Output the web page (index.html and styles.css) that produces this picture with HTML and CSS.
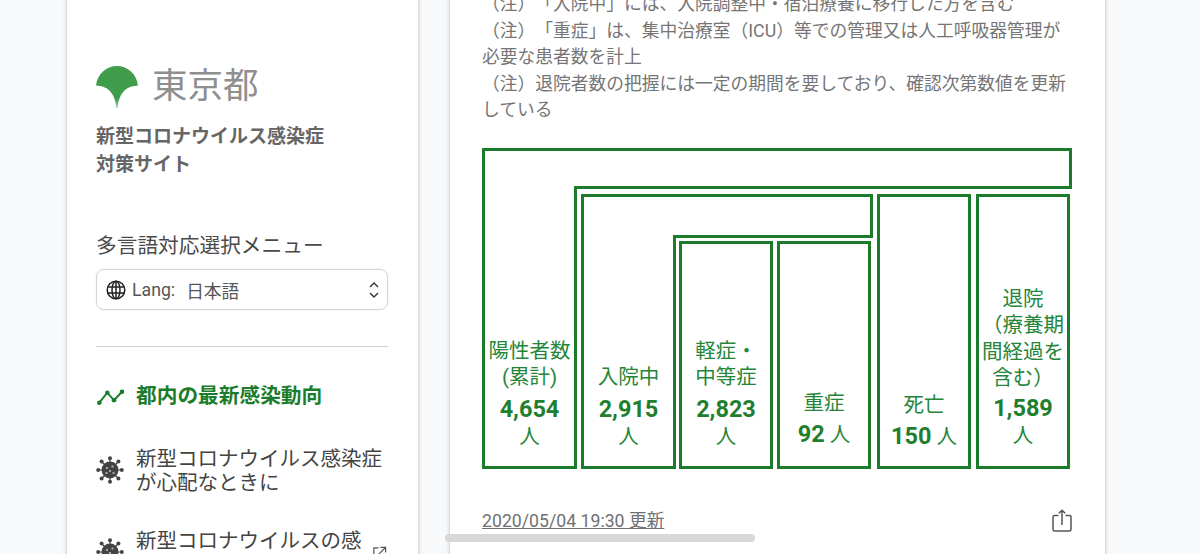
FILE: index.html
```html
<!DOCTYPE html>
<html lang="ja">
<head>
<meta charset="utf-8">
<title>都内の最新感染動向</title>
<link rel="stylesheet" href="styles.css">
</head>
<body>
<div class="page">
  <aside class="side">
    <div class="logo">
      <svg class="ginkgo" viewBox="0 0 42 42"><defs><linearGradient id="g" x1="0" y1="0" x2="0" y2="1"><stop offset="0.78" stop-color="#3f9d4c"/><stop offset="1" stop-color="#a5d4aa"/></linearGradient></defs><path fill="url(#g)" d="M0 19.500C1.500 8 10 0 21 0S40.500 8 42 19.500C32 20 23 25 21.700 42h-1.400C19 25 10 20 0 19.500Z"/></svg>
      <span class="logo-text">東京都</span>
    </div>
    <h1 class="site-title">新型コロナウイルス感染症<br>対策サイト</h1>
    <div class="lang-label">多言語対応選択メニュー</div>
    <div class="select">
      <svg class="globe" viewBox="0 0 20 20" fill="none" stroke="#222" stroke-width="1.5"><circle cx="10" cy="10" r="8.800"/><ellipse cx="10" cy="10" rx="4" ry="8.800"/><path d="M1.600 7h16.800M1.600 13h16.800M10 1v18"/></svg>
      <span class="lang-key">Lang:</span><span class="lang-val">日本語</span>
      <svg class="updown" viewBox="0 0 10 18" fill="none" stroke="#333" stroke-width="1.400"><path d="M1 6l4-4 4 4M1 12l4 4 4-4"/></svg>
    </div>
    <hr class="rule">
    <nav class="nav">
      <a class="nav-item active">
        <svg class="nav-icon trend" viewBox="0 0 28 20" fill="none" stroke="#1b7d2b" stroke-width="2"><path d="M3.300 15.700 11.300 5.700 18 13.300 26 4.700"/><circle cx="3.300" cy="15.700" r="2.300" fill="#1b7d2b" stroke="none"/><circle cx="11.300" cy="5.700" r="2.300" fill="#1b7d2b" stroke="none"/><circle cx="18" cy="13.300" r="2.300" fill="#1b7d2b" stroke="none"/><circle cx="26" cy="4.700" r="2.300" fill="#1b7d2b" stroke="none"/></svg>
        <span>都内の最新感染動向</span>
      </a>
      <a class="nav-item">
        <svg class="nav-icon virus" viewBox="0 0 28 28"><use href="#v"/><defs><g id="v"><circle cx="14" cy="14" r="8.500" fill="#444"/><g stroke="#444" stroke-width="1.200"><path d="M14 2v24M2 14h24M5.500 5.500l17 17M22.500 5.500l-17 17"/></g><g fill="#444"><circle cx="14" cy="2.200" r="2"/><circle cx="14" cy="25.800" r="2"/><circle cx="2.200" cy="14" r="2"/><circle cx="25.800" cy="14" r="2"/><circle cx="5.600" cy="5.600" r="2"/><circle cx="22.400" cy="5.600" r="2"/><circle cx="5.600" cy="22.400" r="2"/><circle cx="22.400" cy="22.400" r="2"/></g><g fill="#bbb"><circle cx="11" cy="12" r="1.100"/><circle cx="16.500" cy="10.500" r="1.100"/><circle cx="14" cy="15" r="1.100"/><circle cx="10.500" cy="17" r="1.100"/><circle cx="17.500" cy="17" r="1.100"/></g></g></defs></svg>
        <span>新型コロナウイルス感染症が心配なときに</span>
      </a>
      <a class="nav-item ext">
        <svg class="nav-icon virus" viewBox="0 0 28 28"><use href="#v"/></svg>
        <span>新型コロナウイルスの感染症</span>
        <svg class="ext-icon" viewBox="0 0 16 16" fill="none" stroke="#555" stroke-width="1.300"><path d="M7 2H2v12h12V9M9 1.500h5.500V7M14.500 1.500 7 9"/></svg>
      </a>
    </nav>
  </aside>

  <main class="card">
    <p class="notes">（注）「入院中」には、入院調整中・宿泊療養に移行した方を含む<br>（注）「重症」は、集中治療室（ICU）等での管理又は人工呼吸器管理が<br>必要な患者数を計上<br>（注）退院者数の把握には一定の期間を要しており、確認次第数値を更新<br>している</p>

    <div class="flow">
      <div class="cell w-first">
        <span class="lbl">陽性者数<br>(累計)</span>
        <span class="val"><b>4,654</b><br>人</span>
      </div>
      <div class="rest">
        <div class="l-box inner">
          <div class="cell w-mid">
            <span class="lbl">入院中</span>
            <span class="val"><b>2,915</b><br>人</span>
          </div>
          <div class="rest rest2">
            <div class="box mild">
              <span class="lbl">軽症・<br>中等症</span>
              <span class="val"><b>2,823</b><br>人</span>
            </div>
            <div class="box severe one">
              <span class="lbl">重症</span>
              <span class="val"><b>92</b> 人</span>
            </div>
          </div>
        </div>
        <div class="box dead one">
          <span class="lbl">死亡</span>
          <span class="val"><b>150</b> 人</span>
        </div>
        <div class="box out">
          <span class="lbl">退院<br>（療養期<br>間経過を<br>含む）</span>
          <span class="val"><b>1,589</b><br>人</span>
        </div>
      </div>
    </div>

    <div class="foot">
      <a class="date">2020/05/04 19:30 更新</a>
      <svg class="share" viewBox="0 0 20 23" fill="none" stroke="#555" stroke-width="1.500"><path d="M6.500 6.500H2.500A1.500 1.500 0 0 0 1 8v12.500A1.500 1.500 0 0 0 2.500 22h15a1.500 1.500 0 0 0 1.500-1.500V8a1.500 1.500 0 0 0-1.500-1.500h-4M10 16V1.200M6.800 4.300 10 1.200l3.200 3.100"/></svg>
    </div>
  </main>
</div>
<div class="scrollbar"></div>
</body>
</html>
```

FILE: styles.css
```css
* { box-sizing: border-box; }
html, body { margin: 0; height: 554px; overflow: hidden; }
body {
  background: #f8f9fa;
  color: #707070;
  font-family: Roboto, "Noto Sans CJK JP", sans-serif;
  font-size: 17.7px;
  text-spacing-trim: space-all;
}
.page {
  display: flex;
  align-items: flex-start;
  gap: 32px;
  padding-left: 67px;
  height: 554px;
  overflow: hidden;
}
.side {
  flex: none;
  width: 351px;
  height: 600px;
  margin-top: -20px;
  padding: 86px 30px 0 29px;
  background: #fff;
  box-shadow: 0 0 4px rgba(0,0,0,.28);
}
.logo { display: flex; align-items: center; height: 42px; }
.ginkgo { width: 42px; height: 42px; flex: none; }
.logo-text {
  margin: -3px 0 0 14px;
  font-size: 35.5px;
  line-height: 42px;
  font-weight: 400;
  color: #8f8f8f;
}
.site-title {
  margin: 15px 0 0;
  font-size: 19px;
  line-height: 28px;
  font-weight: 700;
  color: #666;
}
.lang-label { margin-top: 52px; font-size: 20.7px; line-height: 30px; color: #4a4a4a; }
.select {
  display: flex;
  align-items: center;
  height: 41px;
  margin-top: 8px;
  padding: 0 7px 0 9px;
  border: 1px solid #d5d5d5;
  border-radius: 8px;
  box-shadow: 0 0 2px rgba(0,0,0,.1);
  color: #555;
}
.globe { width: 20px; height: 20px; flex: none; }
.lang-key { margin-left: 6px; }
.lang-val { margin-left: 11px; }
.updown { width: 10px; height: 18px; margin-left: auto; margin-right: 1px; }
.rule { margin: 36px 0 0; border: 0; border-top: 1px solid #d0d0d0; }
.nav { margin-top: 38px; }
.nav-item {
  display: flex;
  align-items: center;
  position: relative;
  font-size: 20.5px;
  line-height: 23.5px;
  color: #444;
}
.nav-item + .nav-item { margin-top: 35px; }
.nav-item.active { color: #1b7d2b; font-weight: 700; font-size: 20.7px; margin-bottom: 39.5px; }
.nav-icon { flex: none; margin-right: 12px; }
.trend { width: 28px; height: 20px; }
.virus { width: 28px; height: 28px; margin-top: -4px; }
.ext { padding-right: 24px; }
.ext-icon { position: absolute; right: 1px; top: 16px; width: 15px; height: 15px; }

.card {
  flex: none;
  width: 655px;
  height: 600px;
  margin-top: -20px;
  padding: 0 33px 0 32px;
  background: #fff;
  box-shadow: 0 0 4px rgba(0,0,0,.28);
}
.notes {
  margin: 11px 0 0;
  font-size: 17.76px;
  line-height: 26.6px;
  white-space: nowrap;
  color: #757575;
}
.flow {
  display: flex;
  align-items: flex-end;
  width: 590px;
  height: 321px;
  margin-top: 24px;
  border: 3px solid #1b7d2b;
  color: #1b7d2b;
}
.cell, .box {
  display: flex;
  flex-direction: column;
  justify-content: flex-end;
  text-align: center;
  padding: 0 0 15px;
}
.w-first { width: 89px; flex: none; align-self: flex-end; }
.w-mid { width: 89px; flex: none; align-self: flex-end; }
.rest {
  display: flex;
  gap: 4px;
  flex: none;
  width: 498px;
  height: 283px;
  margin: 0 -3px -3px 0;
  padding: 5px 0 0 4px;
  background: #fff;
  border-top: 3px solid #1b7d2b;
  border-left: 3px solid #1b7d2b;
}
.box { border: 3px solid #1b7d2b; width: 94px; flex: none; }
.l-box {
  display: flex;
  align-items: flex-end;
  width: 292px;
  height: 275px;
  border: 3px solid #1b7d2b;
  flex: none;
}
.rest.rest2 {
  width: 200px;
  height: 234px;
  gap: 4px;
  margin: 0 -3px -3px 0;
  padding: 3px 2px 0 3px;
}
.out { margin-left: 1px; padding-bottom: 16px; }
.out .val { margin-top: 3px; }
.lbl { display: block; font-size: 20.5px; line-height: 26.6px; color: #258539; }
.val { display: block; margin-top: 5px; font-size: 20.5px; line-height: 27px; color: #258539; }
.severe { padding-bottom: 17px; }
.dead { padding-bottom: 15px; }
.one .val { margin-top: 4px; }
.val b { font-size: 23.5px; font-weight: 700; color: #1f7f2e; }
.foot {
  display: flex;
  justify-content: space-between;
  align-items: flex-start;
  margin-top: 39px;
  width: 590px;
}
.date { font-size: 17.7px; line-height: 26px; text-decoration: underline; color: #707070; }
.share { width: 20px; height: 23px; margin-top: 1px; }
.scrollbar {
  position: fixed;
  left: 445px;
  top: 534px;
  width: 310px;
  height: 8px;
  border-radius: 4px;
  background: #d8d8d8;
}
```
